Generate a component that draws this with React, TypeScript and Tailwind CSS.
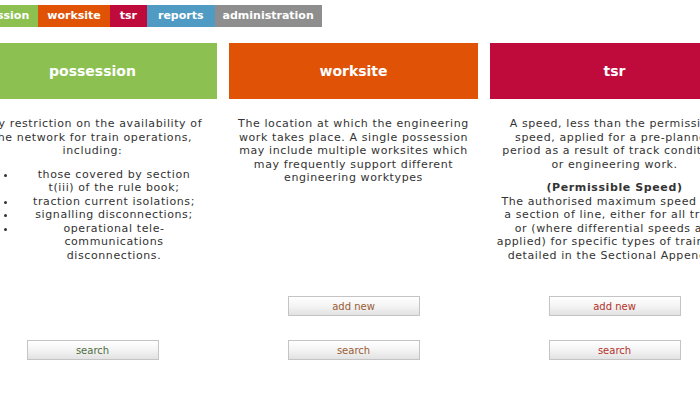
import React from "react";

const font = { fontFamily: '"DejaVu Sans", Verdana, sans-serif' };

function Btn({ label, color }: { label: string; color: string }) {
  return (
    <div
      className={`mx-auto flex h-[20px] w-[132px] items-center justify-center border border-[#c4c4c4] bg-gradient-to-b from-[#ffffff] via-[#f4f4f4] to-[#e2e2e2] text-[10px] ${color}`}
    >
      {label}
    </div>
  );
}

const desc = "h-[197px] px-[6px] pt-[18px] text-center text-[11px] leading-[13.5px] tracking-[0.6px] whitespace-nowrap";

export default function App() {
  return (
    <div className="h-[394px] w-[700px] overflow-hidden bg-white text-[#333]" style={font}>
      <div className="ml-[-48px] mt-[5px] flex h-[22px] text-[11px] font-bold text-white">
        <div className="flex items-center bg-[#8cc152] px-[9px]">possession</div>
        <div className="flex items-center bg-[#e05206] px-[9px]">worksite</div>
        <div className="flex items-center bg-[#bf0a3c] px-[10px]">tsr</div>
        <div className="flex items-center bg-[#4f9bc4] px-[11px]">reports</div>
        <div className="flex items-center bg-[#8e8e8e] px-[8px]">administration</div>
      </div>

      <div className="ml-[-32px] mt-[16px] flex gap-[12px]">
        {/* possession */}
        <div className="w-[249px] shrink-0">
          <div className="flex h-[56px] items-center justify-center bg-[#8cc152] text-[14px] font-bold text-white">
            possession
          </div>
          <div className={desc}>
            <p>
              Any restriction on the availability of
              <br />
              the network for train operations,
              <br />
              including:
            </p>
            <ul className="mt-[10px] list-disc pl-[43px]">
              <li>
                those covered by section
                <br />
                t(iii) of the rule book;
              </li>
              <li>traction current isolations;</li>
              <li>signalling disconnections;</li>
              <li>
                operational tele-
                <br />
                communications
                <br />
                disconnections.
              </li>
            </ul>
          </div>
          <div className="h-[20px]" />
          <div className="mt-[24px]">
            <Btn label="search" color="text-[#4e6e3e]" />
          </div>
        </div>

        {/* worksite */}
        <div className="w-[249px] shrink-0">
          <div className="flex h-[56px] items-center justify-center bg-[#e05206] text-[14px] font-bold text-white">
            worksite
          </div>
          <div className={desc}>
            <p>
              The location at which the engineering
              <br />
              work takes place. A single possession
              <br />
              may include multiple worksites which
              <br />
              may frequently support different
              <br />
              engineering worktypes
            </p>
          </div>
          <Btn label="add new" color="text-[#9a5c34]" />
          <div className="mt-[24px]">
            <Btn label="search" color="text-[#9a5c34]" />
          </div>
        </div>

        {/* tsr */}
        <div className="w-[249px] shrink-0">
          <div className="flex h-[56px] items-center justify-center bg-[#bf0a3c] text-[14px] font-bold text-white">
            tsr
          </div>
          <div className={desc}>
            <p>
              A speed, less than the permissible
              <br />
              speed, applied for a pre-planned
              <br />
              period as a result of track conditions
              <br />
              or engineering work.
            </p>
            <p className="mt-[10px] font-bold">(Permissible Speed)</p>
            <p>
              The authorised maximum speed over
              <br />
              a section of line, either for all trains
              <br />
              or (where differential speeds are
              <br />
              applied) for specific types of trains, as
              <br />
              detailed in the Sectional Appendix.
            </p>
          </div>
          <Btn label="add new" color="text-[#b3322a]" />
          <div className="mt-[24px]">
            <Btn label="search" color="text-[#b3322a]" />
          </div>
        </div>
      </div>
    </div>
  );
}
